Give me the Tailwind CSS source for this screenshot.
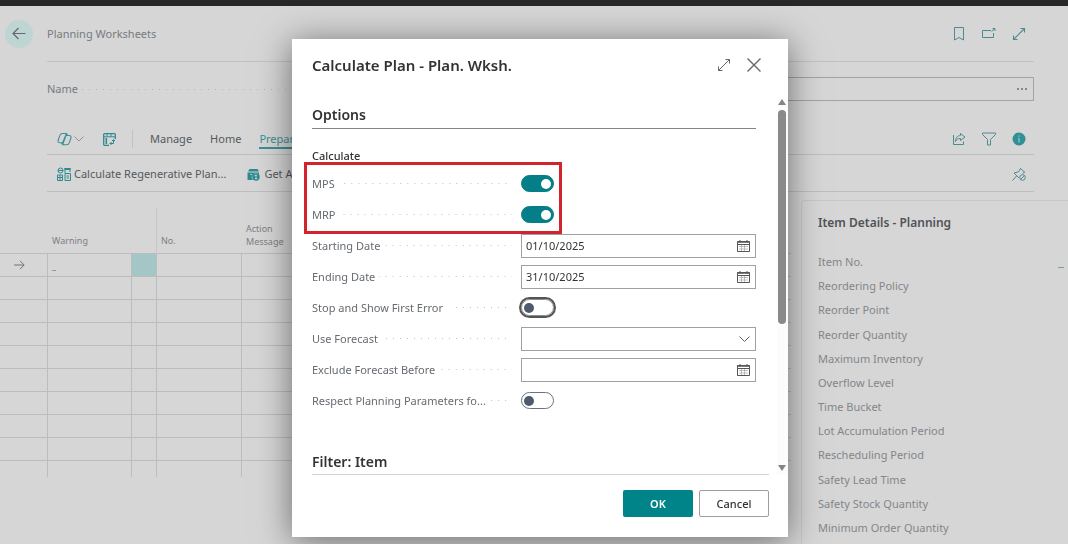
<!DOCTYPE html>
<html lang="en">
<head>
  <meta charset="UTF-8" />
  <meta name="viewport" content="width=device-width, initial-scale=1" />
  <title>Planning Worksheets</title>
  <script src="https://cdn.jsdelivr.net/npm/@tailwindcss/browser@4"></script>
</head>
<body class="h-screen overflow-hidden bg-[#d6d6d6] font-['Noto_Sans','Open_Sans',sans-serif] text-[11px] leading-4 text-[#6f7378]">

  <div class="flex h-full flex-col">
    <div class="h-[6px] shrink-0 bg-[#282828]"></div>

    <!-- Page header -->
    <header class="flex h-[55px] shrink-0 items-center pr-[34px] pl-[5px]">
      <button type="button" aria-label="Back" class="mr-[14px] flex size-7 items-center justify-center rounded-full bg-[#bfd5d3] text-[#5f6b70]">
        <svg class="size-4" viewBox="0 0 16 16" fill="none" stroke="currentColor" stroke-width="1.2"><path d="M14.500 7.500H2M7.500 2 2 7.500 7.500 13" /></svg>
      </button>
      <h1 class="flex-1 text-[#777b80]">Planning Worksheets</h1>
      <div class="flex items-center gap-4 pr-2 text-[#4f8a90]">
        <button type="button" aria-label="Bookmark">
          <svg class="size-[14px]" viewBox="0 0 14 14" fill="none" stroke="currentColor"><path d="M2.500.5h9v12.500L7 10.500 2.500 13z" /></svg>
        </button>
        <button type="button" aria-label="Open in new window">
          <svg class="size-[14px]" viewBox="0 0 14 14" fill="none" stroke="currentColor"><path d="M9 3.500H.5v7h11V6M9.500 4.500 13 1.500M10.500 1.500h2.500v2.500" /></svg>
        </button>
        <button type="button" aria-label="Expand page">
          <svg class="size-[14px]" viewBox="0 0 14 14" fill="none" stroke="currentColor" stroke-width="1.1"><path d="M1.500 12.500 12.500 1.500M8.500 1.500h4v4M1.500 8.500v4h4" /></svg>
        </button>
      </div>
    </header>

    <!-- Worksheet name -->
    <section class="mr-[34px] ml-[47px] flex h-[55px] shrink-0 items-center border-t border-[#c2c2c2]">
      <label for="wkshName" class="text-[#777b80]">Name</label>
      <span class="mx-1 h-px flex-1 bg-[linear-gradient(to_right,#b4b4b4_1px,transparent_1px)] bg-[size:7px_1px]"></span>
      <span class="flex h-6 w-3/4 items-center border border-[#a3a3a3]">
        <input id="wkshName" type="text" class="h-full min-w-0 flex-1 px-1 outline-none" />
        <button type="button" aria-label="Look up name" class="flex gap-[2px] px-[6px]">
          <i class="size-[2px] bg-[#888]"></i><i class="size-[2px] bg-[#888]"></i><i class="size-[2px] bg-[#888]"></i>
        </button>
      </span>
    </section>

    <!-- Action bar -->
    <nav class="mr-[34px] ml-[47px] mt-[6px] flex h-[33px] shrink-0 items-center border-b border-[#bebebe] pt-[2px] pr-2 pl-[10px] text-[#55595d]">
      <button type="button" aria-label="Copilot" class="flex items-center gap-[2px] text-[#3d8f95]">
        <svg class="size-[15px]" viewBox="0 0 15 15" fill="none" stroke="currentColor" stroke-width="1.1" stroke-linejoin="round"><path d="M9.500 1.500H5.300C4.100 1.500 3.300 2.200 2.900 3.400L1.200 8c-.6 1.700.2 2.800 1.800 2.800h2.600zM5.600 12.800h4.200c1.200 0 2-.7 2.400-1.900l1.700-4.600c.6-1.700-.2-2.800-1.800-2.800H9zM9.500 1.500l1 2M5.600 12.800l-1-2" /></svg>
        <svg class="h-[6px] w-[10px] text-[#a08f90]" viewBox="0 0 10 6" fill="none" stroke="currentColor"><path d="M.5.500 5 5l4.500-4.500" /></svg>
      </button>
      <button type="button" aria-label="Analyze" class="ml-[19px] text-[#2f8a90]">
        <svg class="size-[13px]" viewBox="0 0 13 13" fill="none" stroke="currentColor"><path d="M12.300 6V1.500a.8.800 0 0 0-.8-.8h-10a.8.800 0 0 0-.8.800v10c0 .5.400.8.800.8H6" stroke-width="1.300" /><path d="M1 3.800h11M4 1v2.500M8 1v2.500" /><path d="M3.300 5v6" stroke-width="1.600" /><path d="M7 10.500h3.500V7M9 8l1.500-1.500L12 8M8.500 9 7 10.500 8.500 12" /></svg>
      </button>
      <span class="mr-[17px] ml-4 h-[18px] w-px bg-[#c2c2c2]"></span>
      <div class="flex flex-1 gap-[18px] pt-[2px]">
        <a href="#">Manage</a>
        <a href="#">Home</a>
        <a href="#" class="border-b-2 border-[#3d8f95] text-[#3d8f95]">Prepare</a>
      </div>
      <div class="flex items-center gap-4 text-[#4f8a90]">
        <button type="button" aria-label="Share">
          <svg class="size-[14px]" viewBox="0 0 14 14" fill="none" stroke="currentColor" stroke-linejoin="round"><path d="M1.500 3v9.500h10V9.500M8.500 1.500 13 5 8.500 8.500v-2C6 6.500 4.500 7.300 3.500 9.500c0-3.500 2-6 5-6z" /></svg>
        </button>
        <button type="button" aria-label="Filter">
          <svg class="size-[14px]" viewBox="0 0 14 14" fill="none" stroke="currentColor" stroke-linejoin="round"><path d="M.5 1h13v1.500l-5 5V13h-3V7.500l-5-5z" /></svg>
        </button>
        <button type="button" aria-label="Details">
          <svg class="size-[14px]" viewBox="0 0 14 14"><circle cx="7" cy="7" r="6.500" fill="#2f9095" /><path d="M7 3.500v1.200M7 6v4.500" stroke="#9fc9cb" stroke-width="1.200" /></svg>
        </button>
      </div>
    </nav>
    <div class="mr-[34px] ml-[47px] flex h-[37px] shrink-0 items-center border-b border-[#bebebe] pt-[2px] pr-2 pl-[10px] text-[#55595d]">
      <button type="button" class="flex items-center gap-[3px]">
        <svg class="size-[14px] text-[#2f8a90]" viewBox="0 0 14 14" fill="none" stroke="currentColor"><circle cx="3.500" cy="3.500" r="2.500" /><path d="M1 3.500h5M8 1v5M13 1v4M.5 8h5v5.500h-5zM.5 10.500h5M3 8v5.500M8 6.500h5.500v7H8zM9.500 9h2.500M9.500 11h2.500" /><path d="M7.500 2h6" stroke-width="2" /></svg>
        Calculate Regenerative Plan...
      </button>
      <button type="button" class="ml-[21px] flex items-center gap-1">
        <svg class="size-[13px]" viewBox="0 0 13 13"><path d="M2.500 1h8L12 3.500H1zM.5 4.500H12v2A4 4 0 0 0 6 12H.5z" fill="#2f8a90" /><circle cx="9" cy="9" r="3.700" fill="#2f8a90" /><path d="M9 6.500v5M7.500 7.500h2.300M8 10.500h2.300M3 6.500h2" stroke="#c6d8d8" stroke-width=".8" /></svg>
        Get Action Messages...
      </button>
      <span class="flex-1"></span>
      <button type="button" aria-label="Unpin" class="text-[#4f8a90]">
        <svg class="size-[14px]" viewBox="0 0 14 14" fill="none" stroke="currentColor"><path d="M.5 13.500 4.500 9M8 1l5 4.500M8.500 1.500 6.500 4.800 2 6l5 5M12.500 5.200 10.500 6.500" /><circle cx="10.500" cy="10.500" r="2.800" /><path d="m8.500 12.500 4-4" /></svg>
      </button>
    </div>

    <div class="flex min-h-0 flex-1">
      <!-- Worksheet lines -->
      <div class="min-w-0 flex-1 pt-4">
        <table class="w-full table-fixed border-separate border-spacing-0 text-left text-[9px] leading-[13px]">
          <colgroup>
            <col class="w-12" />
            <col class="w-[84px]" />
            <col class="w-[25px]" />
            <col class="w-[85px]" />
            <col />
          </colgroup>
          <thead>
            <tr class="h-[46px] align-bottom text-[#7d8084]">
              <th aria-label="Current line" class="border-b border-[#bcbcbc]"></th>
              <th colspan="2" class="border-r border-b border-[#bcbcbc] border-r-[#c8c8c8] pb-[6px] pl-1 font-normal">Warning</th>
              <th class="border-b border-[#bcbcbc] pb-[6px] pl-1 font-normal">No.</th>
              <th class="border-b border-[#bcbcbc] pb-[5px] pl-1 font-normal">Action<br />Message</th>
            </tr>
          </thead>
          <tbody id="lines"></tbody>
        </table>
      </div>

      <!-- Fact box -->
      <aside class="ml-[10px] mt-2 flex w-1/4 shrink-0 flex-col rounded-tl border-t border-l border-[#c8c8c8] pl-4">
        <h2 class="mt-[10px] text-xs leading-6 font-semibold text-[#505357]">Item Details - Planning</h2>
        <ul class="mt-[15px] mb-1 flex flex-1 flex-col justify-between leading-6 text-[#83868a]">
          <li class="flex justify-between">Item No.<span class="mt-[17px] mr-1 h-px w-[6px] bg-[#6fa5a8]"></span></li>
          <li>Reordering Policy</li>
          <li>Reorder Point</li>
          <li>Reorder Quantity</li>
          <li>Maximum Inventory</li>
          <li>Overflow Level</li>
          <li>Time Bucket</li>
          <li>Lot Accumulation Period</li>
          <li>Rescheduling Period</li>
          <li>Safety Lead Time</li>
          <li>Safety Stock Quantity</li>
          <li>Minimum Order Quantity</li>
        </ul>
      </aside>
    </div>
  </div>

  <!-- Request page dialog -->
  <div class="fixed inset-0 flex items-start justify-center pt-[39px] pl-3">
    <div role="dialog" aria-labelledby="dlgTitle" class="w-full max-w-[496px] bg-white shadow-[0_4px_32px_rgba(0,0,0,0.5)]">
      <div class="flex h-[58px] items-center pr-[26px] pb-[6px] pl-5 text-[#666]">
        <h2 id="dlgTitle" class="flex-1 text-[15px] leading-6 font-semibold text-[#333]">Calculate Plan - Plan. Wksh.</h2>
        <button type="button" aria-label="Expand" class="mr-[15px]">
          <svg class="size-[14px]" viewBox="0 0 14 14" fill="none" stroke="currentColor"><path d="M1.500 12.500 12.500 1.500M8.500 1.500h4v4M1.500 8.500v4h4" /></svg>
        </button>
        <button type="button" aria-label="Close">
          <svg class="size-4" viewBox="0 0 16 16" fill="none" stroke="currentColor" stroke-width="1.400"><path d="m1.500 1.500 13 13M14.500 1.500l-13 13" /></svg>
        </button>
      </div>

      <div class="flex">
        <form id="planForm" class="ml-5 flex-1 border-b border-[#d4d4d4] text-[#666b70]">
          <div class="mr-[13px]">
            <h3 class="flex h-8 items-center border-b border-[#858585] pt-1 text-sm font-semibold text-[#333]">Options</h3>
            <h4 class="mt-[18px] mb-[3px] leading-[18px] font-medium text-[#333]">Calculate</h4>

            <div class="relative">
              <div class="flex h-[31px] items-center">
                <div class="mr-[9px] flex w-[200px] items-center gap-2">
                  <label for="mps">MPS</label>
                  <span class="h-px flex-1 bg-[linear-gradient(to_right,#c0c0c0_1px,transparent_1px)] bg-[size:7px_1px] bg-right"></span>
                </div>
                <input id="mps" type="checkbox" role="switch" checked class="flex h-[17px] w-[33px] appearance-none items-center justify-start rounded-full border border-[#6b7280] px-1 before:size-[10px] before:rounded-full before:bg-[#505a6d] checked:justify-end checked:border-[#057f87] checked:bg-[#057f87] checked:px-[2px] checked:before:bg-white" />
              </div>
              <div class="flex h-[31px] items-center">
                <div class="mr-[9px] flex w-[200px] items-center gap-2">
                  <label for="mrp">MRP</label>
                  <span class="h-px flex-1 bg-[linear-gradient(to_right,#c0c0c0_1px,transparent_1px)] bg-[size:7px_1px] bg-right"></span>
                </div>
                <input id="mrp" type="checkbox" role="switch" checked class="flex h-[17px] w-[33px] appearance-none items-center justify-start rounded-full border border-[#6b7280] px-1 before:size-[10px] before:rounded-full before:bg-[#505a6d] checked:justify-end checked:border-[#057f87] checked:bg-[#057f87] checked:px-[2px] checked:before:bg-white" />
              </div>
              <!-- highlight around the two switches -->
              <div class="pointer-events-none absolute -top-[6px] -bottom-1 -left-2 w-[258px] border-3 border-[#d3242e]"></div>
            </div>

            <div class="flex h-[31px] items-center">
              <div class="mr-[9px] flex w-[200px] items-center gap-1">
                <label for="startDate">Starting Date</label>
                <span class="h-px flex-1 bg-[linear-gradient(to_right,#c0c0c0_1px,transparent_1px)] bg-[size:7px_1px] bg-right"></span>
              </div>
              <span class="flex h-6 flex-1 items-center border border-[#a0a0a0]">
                <input id="startDate" type="text" value="01/10/2025" class="min-w-0 flex-1 pl-1 text-[#333] outline-none" />
                <button type="button" aria-label="Pick starting date" class="px-[5px] text-[#555]">
                  <svg class="h-3 w-[13px]" viewBox="0 0 13 12" fill="none" stroke="currentColor"><path d="M.5 1.500h12v10H.5zM.5 4.500h12M3 0v2.500M10 0v2.500" /><path d="M.5 2h12" stroke-width="1.500" /><path d="M4.500 5v6M7.500 5v6M2 6.500h9M2 9h9" stroke="#999" stroke-width=".6" /></svg>
                </button>
              </span>
            </div>
            <div class="flex h-[31px] items-center">
              <div class="mr-[9px] flex w-[200px] items-center gap-1">
                <label for="endDate">Ending Date</label>
                <span class="h-px flex-1 bg-[linear-gradient(to_right,#c0c0c0_1px,transparent_1px)] bg-[size:7px_1px] bg-right"></span>
              </div>
              <span class="flex h-6 flex-1 items-center border border-[#a0a0a0]">
                <input id="endDate" type="text" value="31/10/2025" class="min-w-0 flex-1 pl-1 text-[#333] outline-none" />
                <button type="button" aria-label="Pick ending date" class="px-[5px] text-[#555]">
                  <svg class="h-3 w-[13px]" viewBox="0 0 13 12" fill="none" stroke="currentColor"><path d="M.5 1.500h12v10H.5zM.5 4.500h12M3 0v2.500M10 0v2.500" /><path d="M.5 2h12" stroke-width="1.500" /><path d="M4.500 5v6M7.500 5v6M2 6.500h9M2 9h9" stroke="#999" stroke-width=".6" /></svg>
                </button>
              </span>
            </div>
            <div class="flex h-[31px] items-center">
              <div class="mr-[9px] flex w-[200px] items-center gap-2">
                <label for="stopError">Stop and Show First Error</label>
                <span class="h-px flex-1 bg-[linear-gradient(to_right,#c0c0c0_1px,transparent_1px)] bg-[size:7px_1px] bg-right"></span>
              </div>
              <input id="stopError" type="checkbox" role="switch" class="flex h-[17px] w-[33px] appearance-none items-center justify-start rounded-full border border-[#8a8d92] px-[2px] outline-2 outline-[#555] before:size-[10px] before:rounded-full before:bg-[#505a6d]" />
            </div>
            <div class="flex h-[31px] items-center">
              <div class="mr-[9px] flex w-[200px] items-center gap-1">
                <label for="forecast">Use Forecast</label>
                <span class="h-px flex-1 bg-[linear-gradient(to_right,#c0c0c0_1px,transparent_1px)] bg-[size:7px_1px] bg-right"></span>
              </div>
              <span class="relative h-6 flex-1">
                <select id="forecast" class="h-full w-full appearance-none border border-[#a0a0a0] px-1 text-[#333] outline-none"><option></option></select>
                <svg class="pointer-events-none absolute top-[9px] right-[6px] h-[7px] w-[11px] text-[#666]" viewBox="0 0 11 7" fill="none" stroke="currentColor"><path d="m.5.500 5 5 5-5" /></svg>
              </span>
            </div>
            <div class="flex h-[31px] items-center">
              <div class="mr-[9px] flex w-[200px] items-center gap-1">
                <label for="exclude">Exclude Forecast Before</label>
                <span class="h-px flex-1 bg-[linear-gradient(to_right,#c0c0c0_1px,transparent_1px)] bg-[size:7px_1px] bg-right"></span>
              </div>
              <span class="flex h-6 flex-1 items-center border border-[#a0a0a0]">
                <input id="exclude" type="text" class="min-w-0 flex-1 pl-1 text-[#333] outline-none" />
                <button type="button" aria-label="Pick forecast date" class="px-[5px] text-[#555]">
                  <svg class="h-3 w-[13px]" viewBox="0 0 13 12" fill="none" stroke="currentColor"><path d="M.5 1.500h12v10H.5zM.5 4.500h12M3 0v2.500M10 0v2.500" /><path d="M.5 2h12" stroke-width="1.500" /><path d="M4.500 5v6M7.500 5v6M2 6.500h9M2 9h9" stroke="#999" stroke-width=".6" /></svg>
                </button>
              </span>
            </div>
            <div class="flex h-[31px] items-center">
              <div class="mr-[9px] flex w-[200px] items-center gap-1">
                <label for="respect" class="whitespace-nowrap">Respect Planning Parameters fo...</label>
                <span class="h-px flex-1 bg-[linear-gradient(to_right,#c0c0c0_1px,transparent_1px)] bg-[size:7px_1px] bg-right"></span>
              </div>
              <input id="respect" type="checkbox" role="switch" class="flex h-[17px] w-[33px] appearance-none items-center justify-start rounded-full border border-[#6b7280] px-[2px] before:size-[10px] before:rounded-full before:bg-[#505a6d]" />
            </div>

            <h3 class="mt-[33px] flex h-[25px] items-center text-sm font-semibold text-[#333]">Filter: Item</h3>
          </div>
        </form>

        <!-- scroll bar -->
        <div class="ml-2 flex w-[11px] flex-col items-center bg-[#fcfcfc] pt-[2px] pr-[2px] pb-1">
          <svg class="h-[6px] w-2" viewBox="0 0 8 6"><path d="M4 0 8 6H0z" fill="#858585" /></svg>
          <div class="mt-[5px] h-[214px] w-2 rounded-full bg-[#8a8a8a]"></div>
          <svg class="mt-auto h-[6px] w-2" viewBox="0 0 8 6"><path d="M0 0h8L4 6z" fill="#858585" /></svg>
        </div>
      </div>

      <div class="flex justify-end gap-[6px] pt-[15px] pr-[19px] pb-5 font-medium">
        <button type="submit" form="planForm" class="h-[27px] w-[70px] rounded-xs bg-[#008489] font-semibold text-white">OK</button>
        <button type="button" class="h-[27px] w-[70px] rounded-xs border border-[#a39a9c] text-[#333]">Cancel</button>
      </div>
    </div>
  </div>

<script>
  // worksheet lines: the first one is active, the rest are blank
  const lines = document.getElementById('lines');
  const arrow = '<svg class="ml-[14px] h-[10px] w-[11px]" viewBox="0 0 11 10" fill="none" stroke="#6f7378"><path d="M0 5h10M6 .8 10.200 5 6 9.200" /></svg>';

  for (let i = 0; i < 10; i++) {
    const tr = document.createElement('tr');
    const edge = i < 9 ? 'border-b' : '';
    tr.className = i < 9 ? 'h-[23px]' : 'h-4';
    tr.innerHTML = `
      <td class="${edge} border-r border-[#bcbcbc]">${i === 0 ? arrow : ''}</td>
      <td class="${edge} border-r border-[#bcbcbc] pl-1">${i === 0 ? '_' : ''}</td>
      <td class="${edge} border-r border-[#bcbcbc] ${i === 0 ? 'bg-[#a5c6c7]' : ''}"></td>
      <td class="${edge} border-r border-[#bcbcbc]"></td>
      <td class="${edge} border-[#bcbcbc]"></td>`;
    lines.appendChild(tr);
  }
</script>

</body>
</html>
